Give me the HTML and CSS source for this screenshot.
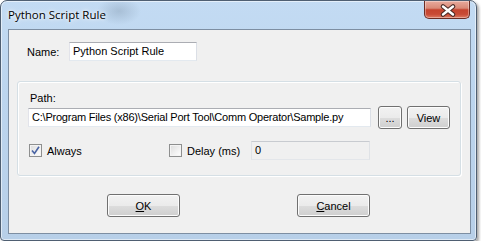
FILE: index.html
```html
<!DOCTYPE html>
<html lang="en">
<head>
  <meta charset="UTF-8">
  <title>Python Script Rule</title>
  <link rel="stylesheet" href="styles.css">
</head>
<body>
  <div class="window">
    <div class="titlebar">
      <span class="title">Python Script Rule</span>
      <div class="close-btn">
        <svg width="46" height="18" viewBox="0 0 46 18">
          <path d="M19 5.5 L29 13.5 M29 5.5 L19 13.5" stroke="#4a2a26" stroke-width="4.6" stroke-linecap="round" fill="none"/>
          <path d="M19 5.5 L29 13.5 M29 5.5 L19 13.5" stroke="#ffffff" stroke-width="2.4" stroke-linecap="round" fill="none"/>
        </svg>
      </div>
    </div>

    <div class="client">
      <div class="name-row">
        <span class="field-label">Name:</span>
        <div class="textbox name-box">Python Script Rule</div>
      </div>

      <div class="group">
        <div class="path-label">Path:</div>
        <div class="path-row">
          <div class="textbox path-box">C:\Program Files (x86)\Serial Port Tool\Comm Operator\Sample.py</div>
          <button class="btn btn-browse">...</button>
          <button class="btn btn-view">View</button>
        </div>
        <div class="option-row">
          <label class="check check-always">
            <span class="checkbox">
              <svg width="9" height="9" viewBox="0 0 9 9">
                <path d="M1 4.5 L3.5 7.5 L8 0.8" stroke="#4a64a4" stroke-width="1.6" fill="none"/>
              </svg>
            </span>
            Always
          </label>
          <label class="check check-delay">
            <span class="checkbox"></span>
            Delay (ms)
          </label>
          <div class="textbox delay-box">0</div>
        </div>
      </div>

      <div class="button-row">
        <button class="btn btn-dialog"><u>O</u>K</button>
        <button class="btn btn-dialog"><u>C</u>ancel</button>
      </div>
    </div>
  </div>
</body>
</html>
```

FILE: styles.css
```css
* {
  margin: 0;
  padding: 0;
  box-sizing: border-box;
}

body {
  background: #ffffff;
  font-family: "Liberation Sans", Arial, sans-serif;
  font-size: 11px;
  color: #000;
}

.window {
  width: 477px;
  height: 241px;
  display: flex;
  flex-direction: column;
  padding: 0 5px 6px 7px;
  border: 1px solid #4f5f72;
  border-radius: 7px 7px 4px 4px;
  background:
    radial-gradient(ellipse 22px 14px at 118px 10px, rgba(90, 110, 130, 0.25), rgba(90, 110, 130, 0)),
    linear-gradient(to bottom, #c3dbf3 0%, #bcd5ee 40%, #b7cfe8 100%);
  box-shadow: inset 0 0 0 1px rgba(255, 255, 255, 0.55), 2px 2px 3px rgba(0, 0, 0, 0.35);
}

.titlebar {
  height: 28px;
  display: flex;
  justify-content: space-between;
  align-items: flex-start;
}

.title {
  margin-top: 6px;
  font-family: "Open Sans", "Noto Sans", sans-serif;
  font-size: 11.5px;
  line-height: 16px;
  color: #000;
  text-shadow: 0 0 6px #ffffff, 0 0 3px #ffffff;
}

.close-btn {
  width: 46px;
  height: 18px;
  margin-right: 1px;
  border: 1px solid #6b2c24;
  border-top: none;
  border-radius: 0 0 5px 5px;
  background: linear-gradient(to bottom, #e8aa9d 0%, #d98a78 42%, #c5432e 52%, #c84a35 78%, #dd7a63 100%);
  box-shadow: inset 0 0 0 1px rgba(255, 255, 255, 0.35);
}

.close-btn svg {
  display: block;
  margin-left: -1px;
}

.client {
  flex: 1;
  padding: 12px 8px 0 8px;
  border: 1px solid #7d8ea2;
  background: #f0f0f0;
}

.name-row {
  display: flex;
  align-items: center;
  padding-left: 10px;
}

.field-label {
  width: 42px;
}

.textbox {
  height: 19px;
  padding-left: 3px;
  line-height: 17px;
  white-space: nowrap;
  overflow: hidden;
  background: #ffffff;
  border: 1px solid;
  border-color: #abadb3 #dbdfe6 #e3e9ef #e2e3ea;
}

.name-box {
  width: 128px;
}

.group {
  width: 444px;
  height: 95px;
  margin-top: 20px;
  padding: 10px 10px 0 10px;
  border: 1px solid #d5dfe5;
  border-radius: 3px;
  box-shadow: inset 1px 1px 0 #ffffff, 1px 1px 0 #ffffff;
}

.path-label {
  padding-left: 2px;
  line-height: 13px;
  margin-bottom: 1px;
}

.path-row {
  display: flex;
  align-items: center;
  height: 23px;
}

.path-box {
  width: 343px;
  letter-spacing: -0.22px;
}

.btn {
  height: 23px;
  font-family: "Liberation Sans", Arial, sans-serif;
  font-size: 11px;
  color: #000;
  border: 1px solid #707070;
  border-radius: 3px;
  background: linear-gradient(to bottom, #f2f2f2 0%, #ebebeb 50%, #dddddd 51%, #cfcfcf 100%);
  box-shadow: inset 0 0 0 1px #fcfcfc;
}

.btn-browse {
  width: 24px;
  margin-left: 7px;
}

.btn-view {
  width: 43px;
  margin-left: 5px;
}

.option-row {
  display: flex;
  align-items: center;
  height: 19px;
  margin-top: 12px;
}

.check {
  display: flex;
  align-items: center;
  gap: 5px;
}

.check-always {
  width: 141px;
  padding-left: 1px;
}

.check-delay {
  width: 82px;
}

.checkbox {
  width: 13px;
  height: 13px;
  display: flex;
  align-items: center;
  justify-content: center;
  border: 1px solid #8e8f8f;
  background: linear-gradient(135deg, #dcdcdc 0%, #f2f2f2 60%, #ffffff 100%);
  box-shadow: inset 0 0 0 1px #f4f4f4;
}

.delay-box {
  width: 119px;
  background: #f0f0f0;
  border-color: #c8cbd0 #dfe2e6 #e3e6ea #dfe2e6;
}

.button-row {
  display: flex;
  gap: 117px;
  margin-top: 18px;
  padding-left: 90px;
}

.btn-dialog {
  width: 73px;
}
```
